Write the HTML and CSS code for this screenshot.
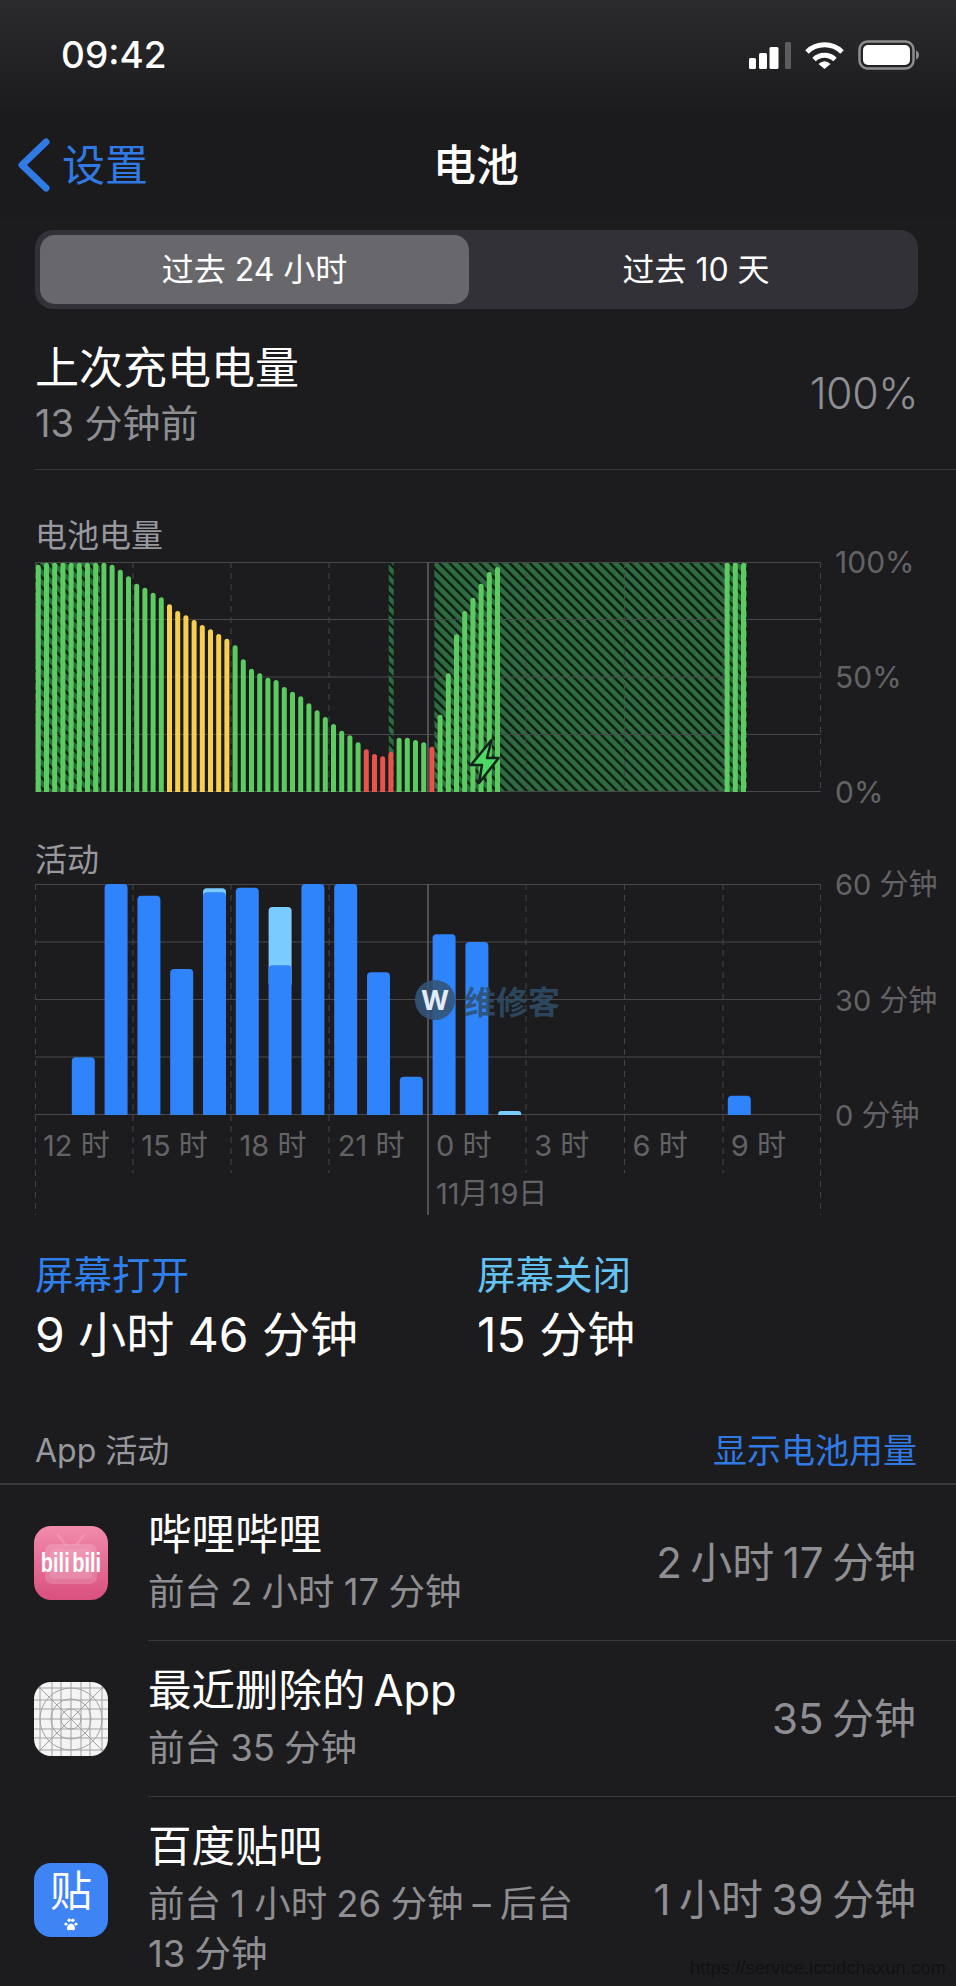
FILE: index.html
```html
<!DOCTYPE html>
<html lang="zh-CN">
<head>
    <meta charset="UTF-8">
    <meta name="viewport" content="width=device-width, initial-scale=1.0">
    <title>电池</title>
    <link rel="stylesheet" href="styles.css">
</head>
<body>

    <div class="status">
        <span class="time">09:42</span>
        <div class="status-icons">
            <svg width="42" height="27" viewBox="0 0 42 27">
                <rect x="0" y="16" width="7" height="11" rx="1.5" fill="#fff"/>
                <rect x="10" y="11" width="8" height="16" rx="1.5" fill="#fff"/>
                <rect x="20.5" y="5" width="9" height="22" rx="1.5" fill="#fff"/>
                <rect x="36" y="0" width="6" height="27" rx="1.5" fill="#5c5c5e"/>
            </svg>
            <svg width="39" height="28" viewBox="0 0 39 28" fill="none" stroke="#fff" stroke-width="5">
                <path d="M2 11A25 25 0 0 1 37 11"/>
                <path d="M9 18.500A15 15 0 0 1 30 18.500"/>
                <path d="M13.500 23Q19.500 17.500 25.500 23L19.500 28Z" fill="#fff" stroke="none"/>
            </svg>
            <svg width="61" height="30" viewBox="0 0 61 30">
                <rect x="1.500" y="1.500" width="54" height="27" rx="8" fill="none" stroke="#8e8e90" stroke-width="2.500"/>
                <rect x="5" y="5" width="47" height="20" rx="5" fill="#fff"/>
                <path d="M58 10.500Q61 12 61 15T58 19.500Z" fill="#8e8e90"/>
            </svg>
        </div>
    </div>

    <nav class="nav">
        <a class="back" href="#">
            <svg width="32" height="54" viewBox="0 0 32 54" fill="none" stroke="#2f7ae5" stroke-width="7" stroke-linecap="round" stroke-linejoin="round">
                <path d="M28 4L4 27L28 50"/>
            </svg>
            <span class="nav-text">设置</span>
        </a>
        <h1 class="nav-title"><span class="nav-text">电池</span></h1>
    </nav>

    <div class="segment">
        <div class="segment-item active"><span>过去 24 小时</span></div>
        <div class="segment-item"><span>过去 10 天</span></div>
    </div>

    <div class="last-charge">
        <div>
            <div class="last-title">上次充电电量</div>
            <div class="last-sub">13 分钟前</div>
        </div>
        <div class="last-value">100%</div>
    </div>

    <section class="chart-block">
        <h2 class="chart-label">电池电量</h2>
        <div class="chart">
            <svg class="plot" width="786" height="230" viewBox="0 0 786 230">
                <defs>
                    <pattern id="hatch" width="7.100" height="7.100" patternUnits="userSpaceOnUse" patternTransform="rotate(-45)">
                        <rect width="7.100" height="7.100" fill="#2f6b40"/>
                        <rect width="2.400" height="7.100" fill="#0c1c10"/>
                    </pattern>
                </defs>
                <rect width="65" height="230" fill="url(#hatch)"/>
                <rect x="353.700" width="5" height="230" fill="url(#hatch)"/>
                <rect x="399.400" width="312.600" height="230" fill="url(#hatch)"/>
                <path class="grid-h" d="M0 .5H786M0 57.500H786M0 115H786M0 172.500H786M0 229.500H786"/>
                <path class="grid-v" d="M.5 0V230M98 0V230M196 0V230M294 0V230M491 0V230M589.500 0V230M688 0V230M785.500 0V230"/>
                <path class="grid-day" d="M393 0V230"/>
                <path class="bar-green" d="M3.300 240V5.200M11.500 240V3.200M19.700 240V3.200M27.900 240V3.200M36.100 240V3.200M44.300 240V3.200M52.500 240V3.200M60.700 240V3.200M68.900 240V3.200M77.100 240V5.200M85.300 240V10.200M93.500 240V16.800M101.700 240V24.200M109.900 240V28.200M118.100 240V33.200M126.300 240V37.800M200.100 240V85.800M208.300 240V99.800M216.500 240V109.200M224.700 240V113.800M232.900 240V118.200M241.100 240V120.500M249.300 240V127.500M257.500 240V132.200M265.700 240V136.800M273.900 240V143.800M282.100 240V150.800M290.300 240V157.500M298.500 240V164.500M306.700 240V171.200M314.900 240V175.800M323.100 240V182.800M364.100 240V178.200M372.300 240V178.200M380.500 240V180.500M388.700 240V182.800M405.100 240V155.200M413.300 240V113.800M421.500 240V74.800M429.700 240V51.500M437.900 240V38.200M446.100 240V24.200M454.300 240V12.500M462.500 240V7.500M692.100 240V3.200M700.300 240V3.200M708.500 240V3.200"/>
                <path class="bar-yellow" d="M134.500 240V44.800M142.700 240V51.500M150.900 240V55.800M159.100 240V60.500M167.300 240V65.500M175.500 240V69.800M183.700 240V74.500M191.900 240V79.200"/>
                <path class="bar-red" d="M331.300 240V189.800M339.500 240V194.500M347.700 240V196.800M355.900 240V192.200M396.900 240V187.200"/>
                <path class="bolt" d="M456.500 178L436 203H447L444 221L463.600 196H452Z"/>
            </svg>
            <div class="y-axis">
                <span>100%</span>
                <span>50%</span>
                <span>0%</span>
            </div>
        </div>
    </section>

    <section class="chart-block">
        <h2 class="chart-label chart-label-low">活动</h2>
        <div class="chart">
            <div>
                <svg class="plot plot-open" width="786" height="231" viewBox="0 0 786 231">
                    <path class="grid-h" d="M0 .5H786M0 58H786M0 115.500H786M0 173H786M0 230.500H786"/>
                    <path class="grid-v" d="M.5 0V331M98 0V289M196 0V289M294 0V289M491 0V289M589.500 0V289M688 0V289M785.500 0V331"/>
                    <path class="grid-day" d="M393 0V331"/>
                    <svg width="786" height="231">
                        <g class="act-light">
                            <rect x="168" y="4.300" width="23" height="40" rx="4"/>
                            <rect x="233.600" y="23" width="23" height="80" rx="4"/>
                            <rect x="463.200" y="227" width="23" height="20" rx="3"/>
                        </g>
                        <g class="act-blue">
                            <rect x="36.800" y="173.300" width="23" height="80" rx="4"/>
                            <rect x="69.600" y="0" width="23" height="250" rx="4"/>
                            <rect x="102.400" y="11.700" width="23" height="240" rx="4"/>
                            <rect x="135.200" y="85" width="23" height="170" rx="4"/>
                            <rect x="168" y="8.300" width="23" height="240" rx="4"/>
                            <rect x="200.800" y="3.700" width="23" height="240" rx="4"/>
                            <rect x="233.600" y="81.300" width="23" height="170" rx="4"/>
                            <rect x="266.400" y="0" width="23" height="250" rx="4"/>
                            <rect x="299.200" y="0" width="23" height="250" rx="4"/>
                            <rect x="332" y="88.300" width="23" height="170" rx="4"/>
                            <rect x="364.800" y="192.700" width="23" height="60" rx="4"/>
                            <rect x="397.600" y="50.300" width="23" height="200" rx="4"/>
                            <rect x="430.400" y="58" width="23" height="200" rx="4"/>
                            <rect x="692.800" y="211.700" width="23" height="40" rx="4"/>
                        </g>
                    </svg>
                </svg>
                <div class="hours">
                    <span>12 时</span>
                    <span>15 时</span>
                    <span>18 时</span>
                    <span>21 时</span>
                    <span>0 时</span>
                    <span>3 时</span>
                    <span>6 时</span>
                    <span>9 时</span>
                </div>
                <div class="day">11月19日</div>
            </div>
            <div class="y-axis y-axis-short">
                <span>60 分钟</span>
                <span>30 分钟</span>
                <span>0 分钟</span>
            </div>
        </div>
    </section>

    <div class="stats">
        <div class="stat">
            <div class="stat-label on">屏幕打开</div>
            <div class="stat-value">9 小时 46 分钟</div>
        </div>
        <div class="stat">
            <div class="stat-label off">屏幕关闭</div>
            <div class="stat-value">15 分钟</div>
        </div>
    </div>

    <div class="section-head">
        <span class="section-title">App 活动</span>
        <a class="section-link" href="#">显示电池用量</a>
    </div>

    <ul class="apps">
        <li class="app">
            <div class="icon icon-bili">
                <svg width="74" height="74" viewBox="0 0 74 74">
                    <path d="M24 9L31 18M50 9L43 18" stroke="#fff" stroke-opacity=".14" stroke-width="2.500" stroke-linecap="round"/>
                    <rect x="11" y="18" width="52" height="40" rx="7" fill="#fff" fill-opacity=".16"/>
                    <rect x="16" y="23" width="42" height="30" rx="4" fill="#fff" fill-opacity=".1"/>
                </svg>
                <span class="bili-name">bili bili</span>
            </div>
            <div class="app-main">
                <div class="app-text">
                    <div class="app-name">哔哩哔哩</div>
                    <div class="app-sub">前台 2 小时 17 分钟</div>
                </div>
                <div class="app-time">2 小时 17 分钟</div>
            </div>
        </li>
        <li class="app">
            <div class="icon icon-blank">
                <svg width="74" height="74" viewBox="0 0 74 74" fill="none" stroke="#a2a2a2" stroke-width="1">
                    <path d="M6 0V74M18 0V74M27 0V74M37 0V74M47 0V74M56 0V74M68 0V74M0 6H74M0 18H74M0 27H74M0 37H74M0 47H74M0 56H74M0 68H74M0 0L74 74M74 0L0 74"/>
                    <circle cx="37" cy="37" r="10"/>
                    <circle cx="37" cy="37" r="20"/>
                    <circle cx="37" cy="37" r="31"/>
                </svg>
            </div>
            <div class="app-main">
                <div class="app-text">
                    <div class="app-name">最近删除的 App</div>
                    <div class="app-sub">前台 35 分钟</div>
                </div>
                <div class="app-time">35 分钟</div>
            </div>
        </li>
        <li class="app">
            <div class="icon icon-tieba">
                <span class="tieba-char">贴</span>
                <svg class="paw" width="14" height="13" viewBox="0 0 14 13" fill="#fff">
                    <circle cx="2" cy="6" r="1.600"/>
                    <circle cx="5.200" cy="2.300" r="1.700"/>
                    <circle cx="8.800" cy="2.300" r="1.700"/>
                    <circle cx="12" cy="6" r="1.600"/>
                    <path d="M7 5.500C9 5.500 11.500 8.500 11 11C10.600 12.800 8.500 12 7 12S3.400 12.800 3 11C2.500 8.500 5 5.500 7 5.500Z"/>
                </svg>
            </div>
            <div class="app-main">
                <div class="app-text app-text-wrap">
                    <div class="app-name">百度贴吧</div>
                    <div class="app-sub">前台 1 小时 26 分钟 – 后台 13 分钟</div>
                </div>
                <div class="app-time">1 小时 39 分钟</div>
            </div>
        </li>
    </ul>

    <div class="wm-logo">
        <span class="wm-badge">W</span>
        <span class="wm-text">维修客</span>
    </div>
    <div class="wm-url">https://service.iccidchaxun.com</div>

</body>
</html>
```

FILE: styles.css
```css
* {
    box-sizing: border-box;
}

html, body {
    margin: 0;
    height: 1986px;
    overflow: hidden;
}

body {
    position: relative;
    background: #1c1c1e;
    color: #fff;
    font-family: Inter, "Noto Sans CJK SC", sans-serif;
}

/* status bar */
.status {
    height: 110px;
    padding: 0 37px 0 61px;
    display: flex;
    justify-content: space-between;
    align-items: center;
    background: linear-gradient(#2b2b2d, #1c1c1e);
}

.time {
    font-size: 37px;
    font-weight: 500;
    margin-top: -2px;
}

.status-icons {
    display: flex;
    align-items: center;
    gap: 14px;
}

/* nav */
.nav {
    height: 110px;
    display: flex;
    align-items: center;
    position: relative;
    background: #1b1b1d;
}

.back {
    display: flex;
    align-items: center;
    gap: 12px;
    padding-left: 18px;
    font-size: 43px;
    color: #2f7ae5;
    text-decoration: none;
}

.nav-text {
    position: relative;
    top: -3px;
}

.nav-title {
    position: absolute;
    left: 0;
    right: 4px;
    margin: 0;
    text-align: center;
    font-size: 43px;
    font-weight: 500;
}

/* segmented control */
.segment {
    margin: 10px 38px 0 35px;
    height: 79px;
    padding: 5px;
    display: flex;
    background: #313137;
    border-radius: 18px;
}

.segment-item {
    flex: 1;
    display: flex;
    align-items: center;
    justify-content: center;
    padding: 0 0 6px 10px;
    font-size: 32px;
}

.segment-item.active {
    flex: 0 0 429px;
    padding-left: 0;
    background: #68686c;
    border-radius: 15px;
}

/* last charge */
.last-charge {
    height: 161px;
    margin-left: 35px;
    padding: 12px 38px 0 0;
    display: flex;
    justify-content: space-between;
    align-items: center;
    border-bottom: 1px solid #38383a;
}

.last-title {
    padding-top: 3px;
    font-size: 44px;
    line-height: 54px;
}

.last-sub {
    font-size: 38px;
    line-height: 57px;
    color: #8e8e93;
}

.last-value {
    font-size: 43px;
    font-weight: 300;
    letter-spacing: -0.5px;
    color: #8e8e93;
    margin-top: -4px;
}

/* charts */
.chart-block {
    padding-left: 35px;
}

.chart-label {
    margin: 46px 0 6px;
    font-size: 32px;
    line-height: 40px;
    font-weight: 400;
    color: #98989f;
}

.chart-label-low {
    margin: 48px 0 4px;
}

.chart {
    display: grid;
    grid-template-columns: 786px auto;
    column-gap: 14px;
}

.plot {
    display: block;
}

.plot-open {
    overflow: visible;
}

.grid-h {
    stroke: #48484a;
    stroke-width: 1;
    fill: none;
}

.grid-v {
    stroke: #444446;
    stroke-width: 1;
    stroke-dasharray: 6 5;
    fill: none;
}

.grid-day {
    stroke: #626266;
    stroke-width: 1.500;
    fill: none;
}

.bar-green, .bar-yellow, .bar-red {
    fill: none;
    stroke-width: 5;
    stroke-linecap: round;
}

.bar-green { stroke: #5ccb60; }
.bar-yellow { stroke: #f7cf50; }
.bar-red { stroke: #e9534a; }

.bolt {
    fill: #4cd964;
    stroke: #14231a;
    stroke-width: 2.500;
    stroke-linejoin: round;
}

.act-blue { fill: #2f83fb; }
.act-light { fill: #7acbff; }

.y-axis {
    height: 270px;
    margin: -20px 0;
    display: flex;
    flex-direction: column;
    justify-content: space-between;
    font-size: 30px;
    line-height: 40px;
    color: #636366;
    white-space: nowrap;
}

.y-axis-short {
    height: 271px;
    margin-top: -19px;
    font-size: 29px;
}

.hours {
    margin-top: 11px;
    display: grid;
    grid-template-columns: repeat(8, 98.250px);
    font-size: 29px;
    line-height: 40px;
    color: #636366;
}

.hours span {
    padding-left: 8px;
}

.day {
    margin: 8px 0 0 401px;
    font-size: 29px;
    line-height: 40px;
    color: #636366;
}

/* screen on / off */
.stats {
    margin-top: 36px;
    padding-left: 35px;
    display: grid;
    grid-template-columns: 442px auto;
}

.stat-label {
    font-size: 38.500px;
    line-height: 50px;
}

.stat-label.on { color: #2f80ed; }
.stat-label.off { color: #65c3f3; }

.stat-value {
    margin-top: 2px;
    font-size: 48px;
    line-height: 66px;
}

/* app list */
.section-head {
    margin-top: 63px;
    padding: 0 39px 12px 35px;
    display: flex;
    justify-content: space-between;
    line-height: 40px;
    border-bottom: 2px solid #38383a;
}

.section-title {
    font-size: 32px;
    color: #98989f;
}

.section-link {
    font-size: 34px;
    color: #2f7ae5;
    text-decoration: none;
}

.apps {
    list-style: none;
    margin: 0;
    padding: 0;
}

.app {
    padding-left: 34px;
    display: flex;
    align-items: center;
    gap: 40px;
}

.icon {
    flex: 0 0 74px;
    height: 74px;
    border-radius: 17px;
    overflow: hidden;
    position: relative;
}

.icon-bili {
    background: linear-gradient(#f28bac, #d9507f);
}

.bili-name {
    position: absolute;
    left: 0;
    right: 0;
    top: 22px;
    text-align: center;
    font-family: "Liberation Sans", sans-serif;
    font-size: 20px;
    line-height: 30px;
    font-weight: 700;
    word-spacing: -3px;
    white-space: nowrap;
    transform: scaleY(1.35);
}

.icon-blank {
    background: #f4f4f4;
}

.icon-blank svg {
    display: block;
}

.icon-tieba {
    background: #3f84f4;
    display: flex;
    flex-direction: column;
    align-items: center;
}

.tieba-char {
    font-size: 42px;
    line-height: 50px;
    margin-top: 3px;
}

.paw {
    margin-top: 2px;
}

.app-main {
    flex: 1;
    min-width: 0;
    padding: 21px 40px 23.500px 0;
    display: flex;
    justify-content: space-between;
    align-items: center;
    border-bottom: 1px solid #38383a;
}

.app:last-child .app-main {
    border-bottom: 0;
}

.app-name {
    font-size: 43.500px;
    line-height: 57px;
    word-spacing: -0.1em;
}

.app-sub {
    margin-top: 3.500px;
    font-size: 36.500px;
    line-height: 50px;
    word-spacing: -0.03em;
    color: #8e8e93;
}

.app-text-wrap {
    max-width: 450px;
}

.app-time {
    margin-top: -3px;
    font-size: 42px;
    word-spacing: -0.08em;
    color: #8e8e93;
    white-space: nowrap;
}

/* watermarks */
.wm-logo {
    position: absolute;
    left: 415px;
    top: 977px;
    display: flex;
    align-items: center;
    gap: 9px;
}

.wm-badge {
    width: 40px;
    height: 40px;
    border-radius: 50%;
    background: rgba(52, 84, 120, 0.9);
    display: flex;
    align-items: center;
    justify-content: center;
    font-size: 27px;
    font-weight: 700;
    color: #e4ecf6;
}

.wm-text {
    font-size: 32px;
    font-weight: 700;
    color: rgba(48, 78, 105, 0.85);
}

.wm-url {
    position: absolute;
    right: 10px;
    top: 1957px;
    font-family: "Liberation Sans", sans-serif;
    font-size: 18.500px;
    color: #111113;
}
```
